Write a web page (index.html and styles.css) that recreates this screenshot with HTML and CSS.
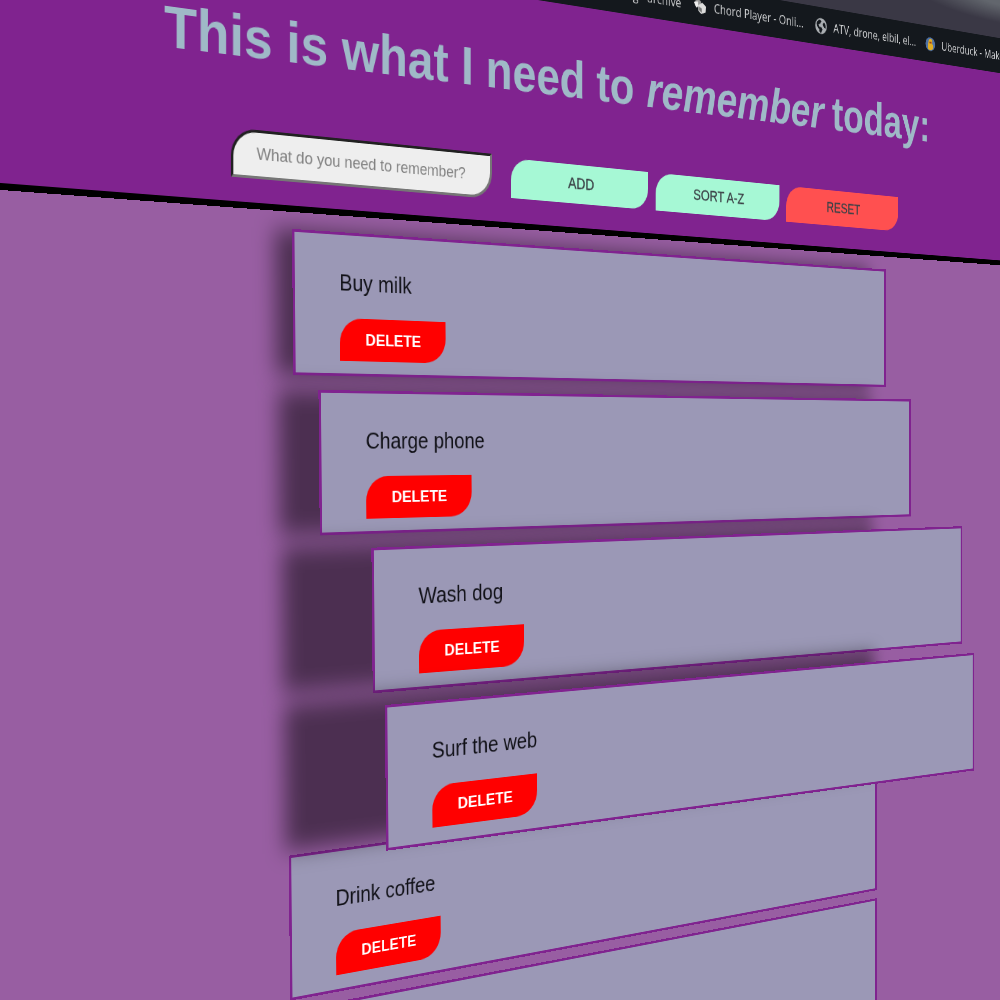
FILE: index.html
```html
<!DOCTYPE html>
<html lang="en">
<head>
<meta charset="utf-8">
<title>Remember today</title>
<link rel="stylesheet" href="styles.css">
</head>
<body>
<main class="scene">
  <section class="plane browser">
    <div class="toolbar"></div>
    <nav class="bookmarks">
      <span class="bookmark first">Blog - archive</span>
      <span class="bookmark"><svg viewBox="0 0 24 24"><path fill="#999" d="M1 8 8 2l6 4-1 6-7 3z"/><path fill="#ddd" d="m9 11 7-4 7 5-1 8-8 3-5-4z"/><path fill="#eee" d="m1 8 7-2 1 6-4 3z"/><path fill="#777" d="m10 13 5 2v6l-5-3z"/></svg>Chord Player - Onli...</span>
      <span class="bookmark"><svg viewBox="0 0 24 24"><circle cx="12" cy="12" r="11.5" fill="#aaaeb2"/><path fill="#15191e" d="M3 9c1-3 4-6 7-6l3 2-3 4-3 1 1 3 5 1 2 3-3 5c-3 0-4-3-3-5-3-1-5-4-6-8zM15 9l3-3c3 2 4 6 3 9l-3-1-2-3z"/></svg>ATV, drone, elbil, el...</span>
      <span class="bookmark"><svg viewBox="0 0 24 24"><circle cx="12" cy="12" r="11.5" fill="#4e71a5"/><path fill="#e0ac24" d="M8 7c0-5 9-5 9 0 0 3-1 4 1 6 3 5-1 9-6 9s-8-4-5-9z"/><path fill="#9b3d18" d="M10 8h5v3h-5z"/></svg>Uberduck - Make Music</span>
    </nav>
    <header class="header">
      <h1 class="title">This is what I need to <em>remember</em> today:</h1>
      <form class="form">
        <input class="entry" type="text" placeholder="What do you need to remember?">
        <button class="action" type="button">ADD</button>
        <button class="action" type="button">SORT A-Z</button>
        <button class="action reset" type="button">RESET</button>
      </form>
    </header>
  </section>

  <article class="plane card row5"><p class="task">Drink coffee</p><button class="delete">DELETE</button></article>
  <article class="plane card row6"></article>
  <div class="plane shadow row1"></div>
  <article class="plane card row1"><p class="task">Buy milk</p><button class="delete">DELETE</button></article>
  <div class="plane shadow row2"></div>
  <article class="plane card row2"><p class="task">Charge phone</p><button class="delete">DELETE</button></article>
  <div class="plane shadow row3"></div>
  <article class="plane card row3"><p class="task">Wash dog</p><button class="delete">DELETE</button></article>
  <div class="plane shadow row4"></div>
  <article class="plane card row4"><p class="task">Surf the web</p><button class="delete">DELETE</button></article>
</main>
</body>
</html>
```
FILE: styles.css
```css
* { box-sizing: border-box; }

body {
  margin: 0;
  background: #985ea2;
  font-family: "Liberation Sans", Arial, sans-serif;
}

.scene {
  position: relative;
  width: 1000px;
  height: 1000px;
  overflow: hidden;
  background: #985ea2;
}

/* Every layer lies on one tilted plane, receding to the right */
.plane {
  position: absolute;
  top: 0;
  left: 0;
  transform-origin: 0 0;
}

.browser {
  z-index: 1;
  width: 1700px;
  transform: matrix3d(.9694, .1285, 0, .000292, .0, 1, 0, .000002, 0, 0, 1, 0, 0, 0, 0, 1) translateY(-255px);
}

.toolbar {
  height: 120px;
  background: radial-gradient(ellipse 200px 36px at 1490px 62px, #62666d 30%, #3a3845 100%);
}

.bookmarks {
  display: flex;
  align-items: center;
  height: 50px;
  padding-left: 780px;
  background: #14181d;
  color: #cfd0d2;
  font: 16.3px "Open Sans", "Noto Sans", sans-serif;
}

.bookmark {
  display: flex;
  flex: none;
  align-items: center;
  gap: 12px;
  width: 209.5px;
  white-space: nowrap;
}

.bookmark.first {
  justify-content: flex-end;
  width: 104px;
  margin-right: 20px;
}

.bookmark svg { width: 22px; height: 22px; }

.header {
  height: 275px;
  padding: 59px 0 0 178px;
  background: #80238f;
  border-bottom: 7px solid #000;
}

.title {
  margin: 0;
  color: #9fb9c7;
  font-size: 62.4px;
  font-weight: bold;
  line-height: 62.5px;
  white-space: nowrap;
}

.title em { margin: 0 -2px 0 2px; }

.form {
  display: flex;
  align-items: center;
  gap: 12px;
  margin: 67px 0 0 78px;
}

.entry {
  width: 340px;
  height: 53px;
  margin-right: 15px;
  padding: 0 28px;
  background: #eee;
  border: 3px inset #767676;
  border-radius: 30px 0;
  font: 18.6px "Liberation Sans", Arial, sans-serif;
}

.entry::placeholder { color: #808080; }

.action {
  width: 208px;
  height: 47px;
  padding: 0;
  border: 0;
  border-radius: 26px 0;
  background: #a6f8d5;
  color: #3c4247;
  font: 18.7px "Liberation Sans", Arial, sans-serif;
  -webkit-text-stroke: .3px #3c4247;
}

.action.reset { background: #ff5050; }

.card,
.shadow {
  --dx: 0px;
  --dy: 0px;
  width: 911.5px;
  height: var(--h);
}

.card {
  padding: 38px 0 0 56px;
  background: #9b98b6;
  border: 3px solid #80238f;
  transform: translate(var(--dx), var(--dy)) matrix3d(.9694, .1255, 0, .000292, .0135, 1, 0, .0000154, 0, 0, 1, 0, 0, 0, 0, 1) translate(317px, var(--y));
}

.shadow {
  background: rgba(0, 0, 0, .5);
  filter: blur(13px);
  transform: translate(var(--sx), var(--dy)) matrix3d(.9694, .1255, 0, .000292, .0135, 1, 0, .0000154, 0, 0, 1, 0, 0, 0, 0, 1) translate(317px, var(--y));
}

.row1 { --dx: 9px; --dy: 6.6px; --sx: -8px; --y: 203.8px; --h: 161.3px; }
.row2 { --dx: 34px; --dy: 8.2px; --sx: -6px; --y: 379.6px; --h: 161.3px; }
.row3 { --dx: 85.5px; --dy: 7.2px; --sx: -4px; --y: 555.4px; --h: 162px; }
.row4 { --dx: 97.5px; --dy: 6.6px; --sx: -3px; --y: 731.2px; --h: 162.5px; }
.row5 { --y: 907px; --h: 162.5px; }
.row6 { --y: 1081.2px; --h: 162px; }

.task {
  margin: 0 0 23.5px;
  color: #101016;
  font-size: 25px;
  line-height: 31px;
}

.delete {
  display: block;
  width: 139.5px;
  height: 48px;
  padding: 0;
  border: 0;
  border-radius: 28px 0;
  background: #f00;
  color: #fff;
  font: bold 18.6px "Liberation Sans", Arial, sans-serif;
}
```
